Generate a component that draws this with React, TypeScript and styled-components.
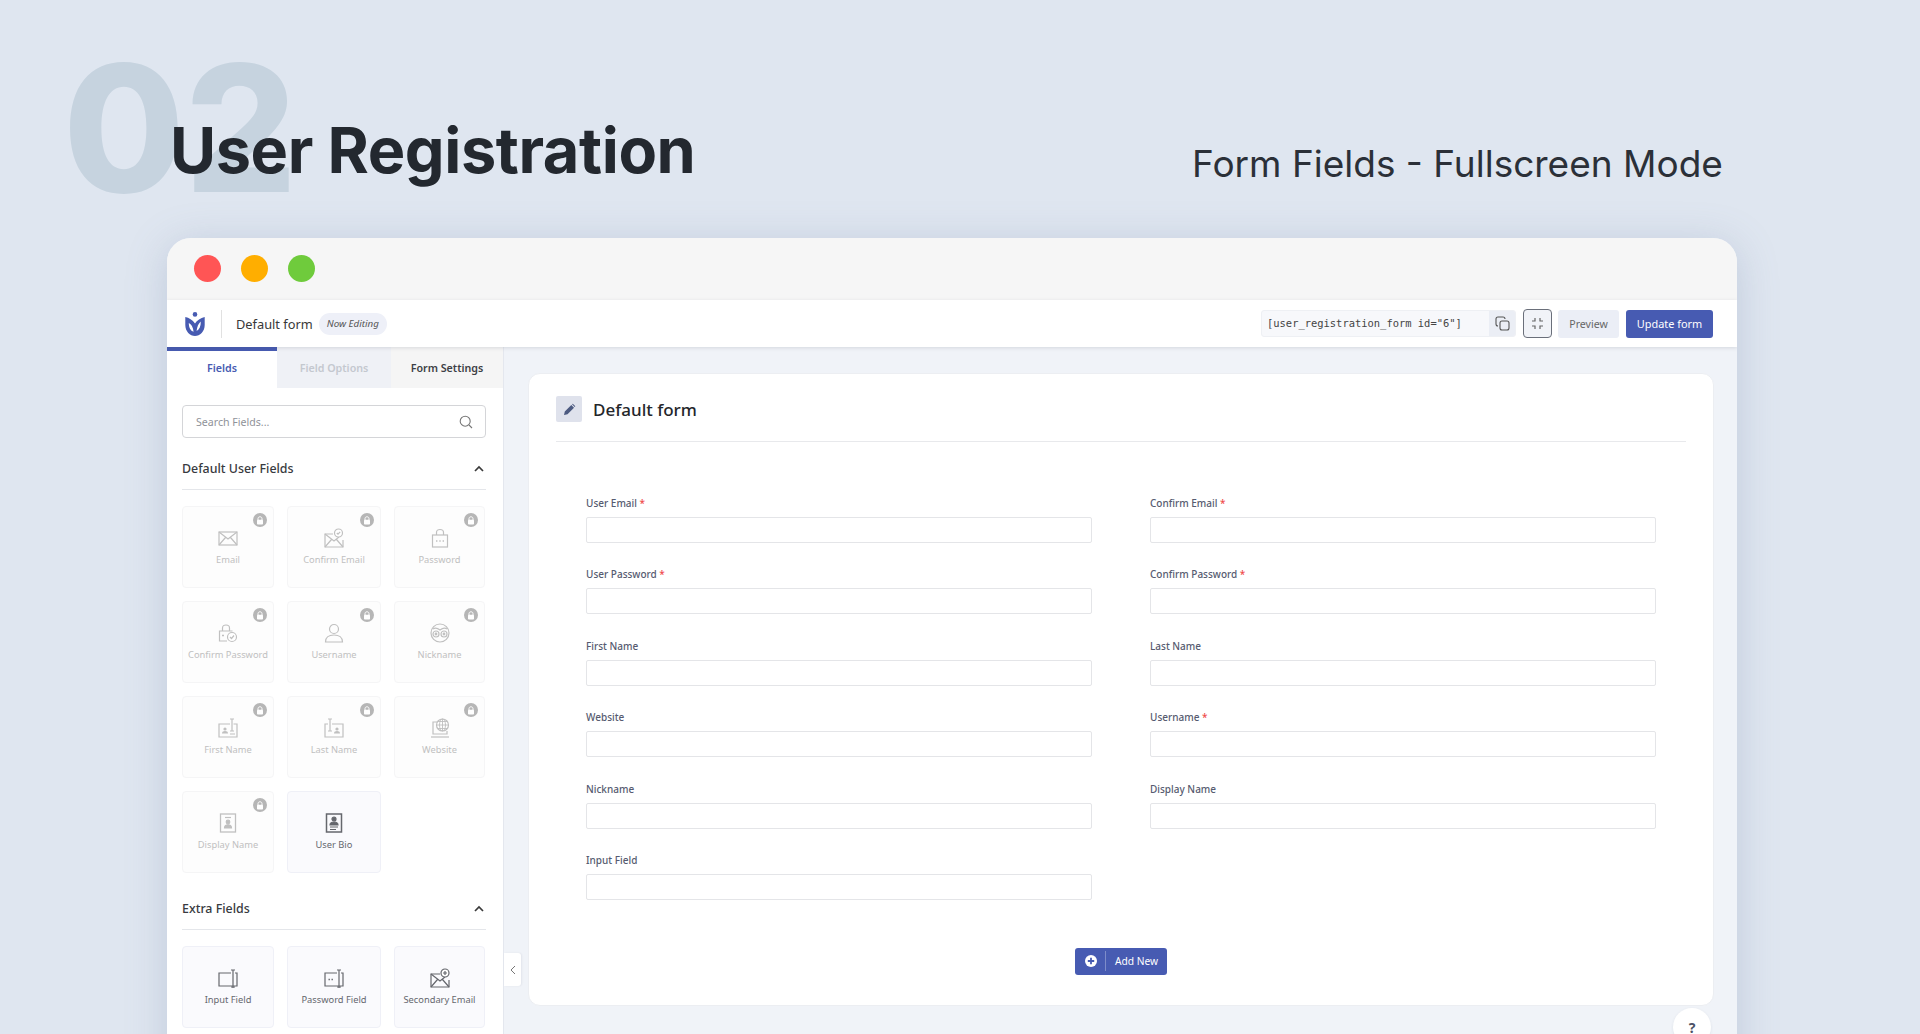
import { ReactNode } from 'react'
import styled, { createGlobalStyle } from 'styled-components'

const GlobalStyle = createGlobalStyle`
  html, body {
    margin: 0;
    height: 1034px;
    overflow: hidden;
    background: #dfe6f0;
    font-family: "Noto Sans", "Open Sans", sans-serif;
  }
  * { box-sizing: border-box; }
`

const BLUE = '#475bb2'

const Page = styled.div`
  width: 1920px;
  height: 1034px;
  overflow: hidden;
  padding: 0 183px 0 167px;
`

const Hero = styled.header`
  position: relative;
  height: 238px;
`

const BigNumber = styled.div`
  position: absolute;
  left: -104px;
  top: 38px;
  font-family: Inter, sans-serif;
  font-size: 176px;
  line-height: 180px;
  font-weight: 800;
  letter-spacing: 0;
  color: #c6d3df;
`

const Title = styled.h1`
  position: absolute;
  left: 3px;
  top: 115px;
  margin: 0;
  font-family: Inter, sans-serif;
  font-size: 63px;
  line-height: 70px;
  font-weight: 700;
  letter-spacing: -0.4px;
  color: #23282f;
`

const Subtitle = styled.div`
  position: absolute;
  left: 1025px;
  top: 140px;
  font-family: Inter, sans-serif;
  font-size: 37px;
  line-height: 48px;
  font-weight: 400;
  white-space: nowrap;
  color: #2b3038;
`

const Window = styled.div`
  position: relative;
  width: 1570px;
  height: 1000px;
  border-radius: 24px 24px 0 0;
  background: #f0f3f8;
  box-shadow: 0 6px 40px rgba(110, 130, 165, 0.28);
  overflow: hidden;
`

const Chrome = styled.div`
  height: 62px;
  display: flex;
  align-items: center;
  gap: 20px;
  padding: 0 0 1px 27px;
  background: #f6f6f6;
`

const Dot = styled.span<{ $color: string }>`
  width: 27px;
  height: 27px;
  border-radius: 50%;
  background: ${(p) => p.$color};
`

const TopBar = styled.div`
  position: relative;
  z-index: 2;
  height: 47px;
  display: flex;
  align-items: center;
  padding: 0 24px 0 18px;
  background: #fff;
  box-shadow: 0 1px 4px rgba(60, 70, 90, 0.16);
`

const LogoWrap = styled.div`
  width: 37px;
  height: 28px;
  display: flex;
  align-items: center;
  border-right: 1px solid #e1e1e1;
`

const FormName = styled.span`
  margin-left: 14px;
  font-size: 12.8px;
  color: #383838;
`

const EditBadge = styled.span`
  margin-left: 6px;
  height: 22px;
  padding: 0 8px;
  display: flex;
  align-items: center;
  border-radius: 11px;
  background: #eef0f8;
  font-size: 9.8px;
  font-style: italic;
  color: #555;
`

const TopActions = styled.div`
  margin-left: auto;
  display: flex;
  align-items: center;
`

const Shortcode = styled.div`
  width: 255px;
  height: 27px;
  display: flex;
  border: 1px solid #eef0f4;
  border-radius: 3px;
  background: #f7f8fb;
  overflow: hidden;
`

const ShortcodeText = styled.span`
  flex: 1;
  padding-left: 5px;
  font-family: "DejaVu Sans Mono", monospace;
  font-size: 10.45px;
  line-height: 25px;
  color: #444;
`

const CopyBox = styled.span`
  width: 26px;
  display: flex;
  align-items: center;
  justify-content: center;
  background: #ebeef5;
`

const CollapseButton = styled.button`
  margin-left: 7px;
  width: 29px;
  height: 29px;
  padding: 0;
  display: flex;
  align-items: center;
  justify-content: center;
  border: 1px solid #6a6f7a;
  border-radius: 4px;
  background: #f1f3f8;
`

const ActionButton = styled.button<{ $primary?: boolean }>`
  height: 28px;
  padding: 0;
  border: 0;
  border-radius: 3px;
  font-family: inherit;
  font-size: ${(p) => (p.$primary ? 10.9 : 10.6)}px;
  margin-left: ${(p) => (p.$primary ? 7 : 6)}px;
  width: ${(p) => (p.$primary ? 87 : 61)}px;
  background: ${(p) => (p.$primary ? BLUE : '#ebeef6')};
  color: ${(p) => (p.$primary ? '#fff' : '#666')};
`

const Workspace = styled.div`
  display: flex;
  height: 891px;
`

const Sidebar = styled.aside`
  position: relative;
  width: 337px;
  flex: none;
  background: #fff;
  border-right: 1px solid #e4e7ee;
`

const Tabs = styled.div`
  display: flex;
  height: 41px;
`

const Tab = styled.div<{ $active?: boolean; $muted?: boolean }>`
  width: ${(p) => (p.$active ? 110 : p.$muted ? 114 : 112)}px;
  display: flex;
  align-items: center;
  justify-content: center;
  padding-bottom: 4px;
  font-size: 10.7px;
  font-weight: 600;
  border-top: 4px solid ${(p) => (p.$active ? BLUE : 'transparent')};
  background: ${(p) => (p.$active ? '#fff' : p.$muted ? '#eff1f6' : '#f5f5f5')};
  color: ${(p) => (p.$active ? BLUE : p.$muted ? '#c4c8cf' : '#3d3f45')};
`

const SidePanel = styled.div`
  padding: 17px 17px 0 15px;
`

const SearchBox = styled.div`
  height: 33px;
  display: flex;
  align-items: center;
  justify-content: space-between;
  padding: 0 12px 0 13px;
  border: 1px solid #d4d5d8;
  border-radius: 4px;
  font-size: 10.6px;
  color: #8f9299;
`

const SectionHead = styled.div<{ $first?: boolean }>`
  margin-top: ${(p) => (p.$first ? 19 : 24)}px;
  height: 33px;
  padding: 3px 2px 0 0;
  display: flex;
  align-items: flex-start;
  justify-content: space-between;
  border-bottom: 1px solid #e4e6ea;
  line-height: 18px;
  font-size: 12.4px;
  font-weight: 500;
  color: #383a40;
`

const SectionChevron = styled.span`
  display: flex;
  height: 18px;
  align-items: center;
`

const FieldGrid = styled.div`
  margin-top: 16px;
  display: grid;
  grid-template-columns: 92px 94px 91px;
  grid-auto-rows: 82px;
  gap: 13px;
`

const FieldCard = styled.div<{ $locked?: boolean }>`
  position: relative;
  display: flex;
  flex-direction: column;
  align-items: center;
  padding-top: 21px;
  border-radius: 4px;
  border: 1px solid ${(p) => (p.$locked ? '#f5f5f6' : '#eff0f7')};
  background: ${(p) => (p.$locked ? '#fdfdfd' : '#fafafd')};
  color: ${(p) => (p.$locked ? '#c0c0c0' : '#65676d')};
  font-size: 9.3px;
  white-space: nowrap;
`

const CardLabel = styled.span`
  margin-top: 4px;
  line-height: 16px;
`

const LockBadge = styled.span`
  position: absolute;
  top: 6px;
  right: 6px;
  width: 14px;
  height: 14px;
  border-radius: 50%;
  display: flex;
  align-items: center;
  justify-content: center;
  background: #b6b6b6;
`

const CollapseTab = styled.div`
  position: absolute;
  top: 606px;
  right: -18px;
  width: 17px;
  height: 33px;
  display: flex;
  align-items: center;
  justify-content: center;
  border-radius: 0 3px 3px 0;
  background: #fff;
  box-shadow: 1px 0 2px rgba(60, 70, 90, 0.08);
`

const Main = styled.main`
  position: relative;
  flex: 1;
  padding: 26px 25px 0 24px;
`

const FormCard = styled.section`
  height: 633px;
  padding: 22px 27px 0;
  border: 1px solid #eceef2;
  border-radius: 12px;
  background: #fff;
`

const FormHeader = styled.div`
  height: 46px;
  display: flex;
  align-items: flex-start;
  gap: 11px;
  border-bottom: 1px solid #e8e9ec;
`

const PencilBox = styled.span`
  width: 26px;
  height: 26px;
  display: flex;
  align-items: center;
  justify-content: center;
  border-radius: 2px;
  background: #dfe2ec;
`

const FormTitle = styled.h2`
  margin: 0;
  font-size: 17px;
  line-height: 28px;
  font-weight: 500;
  color: #24262b;
`

const FormBody = styled.div`
  padding: 53px 30px 0;
  display: grid;
  grid-template-columns: 506px 506px;
  column-gap: 58px;
  row-gap: 23.4px;
`

const Field = styled.div`
  display: flex;
  flex-direction: column;
`

const FieldLabel = styled.label`
  height: 16px;
  margin-bottom: 6px;
  font-size: 10px;
  line-height: 16px;
  font-weight: 500;
  color: #565b70;
`

const Required = styled.span`
  color: #ef4b4b;
`

const TextInput = styled.input`
  height: 26px;
  border: 1px solid #e4e5e8;
  border-radius: 2px;
  background: #fff;
`

const AddRow = styled.div`
  margin-top: 48px;
  display: flex;
  justify-content: center;
`

const AddButton = styled.button`
  width: 92px;
  height: 27px;
  padding: 0 0 0 10px;
  display: flex;
  align-items: center;
  border: 0;
  border-radius: 3px;
  background: ${BLUE};
  color: #fff;
  font-family: inherit;
  font-size: 10.2px;
`

const AddLabel = styled.span`
  margin-left: 8px;
  padding-left: 9px;
  line-height: 20px;
  border-left: 1px solid rgba(255, 255, 255, 0.3);
`

const HelpButton = styled.div`
  position: absolute;
  top: 661px;
  right: 28px;
  width: 38px;
  height: 38px;
  display: flex;
  align-items: center;
  justify-content: center;
  border-radius: 50%;
  background: #fff;
  box-shadow: 0 1px 3px rgba(60, 70, 90, 0.1);
  font-size: 14px;
  font-weight: 700;
  color: #4c5266;
`

const Logo = () => (
  <svg width="20" height="24" viewBox="0 0 20 24">
    <circle cx="10" cy="2.4" r="2.3" fill={BLUE} />
    <path
      d="M.3 5C4 5.500 7.500 8 10 11.500 12 8.500 15.500 6 19.700 5V13C19.700 19.500 15 24 10 24S.3 19.500.3 13Z"
      fill={BLUE}
    />
    <path d="M3.800 11C6.300 12.300 8 15 8.600 19.800 5.500 18.800 3.800 15.500 3.800 11Z" fill="#fff" />
    <path d="M15.800 9.500C13.500 11.500 12 14.500 11.600 19 14.500 17.500 15.800 14 15.800 9.500Z" fill="#fff" />
  </svg>
)

const Glyph = ({ children, size = 20 }: { children: ReactNode; size?: number }) => (
  <svg width={size} height={size} viewBox="0 0 20 20" fill="none" stroke="currentColor" strokeWidth="1.200">
    {children}
  </svg>
)

const envelope = (
  <>
    <rect x="1" y="4" width="18" height="13" />
    <path d="M1 4l9 7 9-7M1 17l6.500-7.500M19 17l-6.500-7.500" />
  </>
)

const person = (
  <>
    <circle cx="7" cy="11" r="1.600" fill="currentColor" stroke="none" />
    <path d="M4 15.500c0-1.600 1.300-2.400 3-2.400s3 .8 3 2.400Z" fill="currentColor" stroke="none" />
  </>
)

const icons: Record<string, ReactNode> = {
  Email: envelope,
  'Confirm Email': (
    <>
      <path d="M9 6H1v13h18v-7" />
      <path d="M1 6l9 7 5-4M1 19l6.500-7.500M19 19l-6.500-7.500" />
      <circle cx="14.500" cy="5" r="4" fill="#fff" />
      <path d="M12.800 5l1.200 1.200 2.200-2.400" />
    </>
  ),
  Password: (
    <>
      <rect x="2.500" y="7" width="15" height="12" />
      <path d="M6.500 7V4.500C6.500 2.600 8 1.500 10 1.500s3.500 1.100 3.500 3V7" />
      <path d="M6 13h1.400M9.300 13h1.400M12.600 13H14" strokeWidth="1.500" />
    </>
  ),
  'Confirm Password': (
    <>
      <path d="M9 18H1.500V8h13" />
      <path d="M4.500 8V5C4.500 3 6 2 8 2s3.500 1 3.500 3v3" />
      <path d="M4 12.500h2" strokeWidth="1.500" />
      <circle cx="14" cy="14" r="4.500" fill="#fff" />
      <path d="M12 14l1.500 1.500 2.500-3" />
    </>
  ),
  Username: (
    <>
      <circle cx="10" cy="6" r="4.500" />
      <path d="M1.500 19c0-4.500 3.500-7 8.500-7s8.500 2.500 8.500 7Z" />
    </>
  ),
  Nickname: (
    <>
      <circle cx="10" cy="10" r="9" />
      <circle cx="6" cy="11" r="3" />
      <circle cx="14" cy="11" r="3" />
      <circle cx="6" cy="11" r=".8" fill="currentColor" />
      <circle cx="14" cy="11" r=".8" fill="currentColor" />
      <path d="M3 6c2-1.500 4.500-1 7 1 2.500-2 5-2.500 7-1" />
    </>
  ),
  'First Name': (
    <>
      <path d="M12 6H1v13h18V6h-3.500" />
      {person}
      <path d="M14 1v12M12 1h4M12 13h4M12 16h5" />
    </>
  ),
  'Last Name': (
    <>
      <path d="M4 6H1v13h18V6H8" />
      <g transform="translate(6 0)">{person}</g>
      <path d="M6 1v12M4 1h4M4 13h4" />
    </>
  ),
  Website: (
    <>
      <path d="M7 4H3v12h14v-3" />
      <path d="M1 19h18" />
      <circle cx="12.500" cy="7" r="6" fill="#fff" />
      <path d="M6.500 7h12M12.500 1v12M8 3.500h9M8 10.500h9" strokeWidth=".9" />
      <ellipse cx="12.500" cy="7" rx="3" ry="6" strokeWidth=".9" />
    </>
  ),
  'Display Name': (
    <>
      <rect x="2.500" y="1" width="15" height="18" strokeWidth="1.300" />
      <path d="M7 4.500h6" />
      <circle cx="10" cy="9" r="1.800" fill="currentColor" />
      <path d="M6.500 15c0-2 1.500-3.200 3.500-3.200s3.500 1.200 3.500 3.200Z" fill="currentColor" />
    </>
  ),
  'User Bio': (
    <>
      <rect x="2.500" y="1" width="15" height="18" strokeWidth="1.500" />
      <circle cx="10" cy="6" r="2" fill="currentColor" />
      <path d="M6 12c0-2 2-3 4-3s4 1 4 3ZM6 14h8M6 16.500h6" fill="currentColor" />
    </>
  ),
  'Input Field': (
    <>
      <path d="M13 5H1v13h18V5h-2" />
      <path d="M15 2v18M13 2h4M13 19h4" />
    </>
  ),
  'Password Field': (
    <>
      <path d="M13 5H1v13h18V5h-2" />
      <path d="M15 2v18M13 2h4M13 19h4" />
      <path d="M4.500 11.500h1.400M7.500 11.500h1.400" strokeWidth="1.600" />
    </>
  ),
  'Secondary Email': (
    <>
      <path d="M10 6H1v13h18v-7" />
      <path d="M1 6l9 7 5-4M1 19l6.500-7.500M19 19l-6.500-7.500" />
      <circle cx="15" cy="5" r="4" fill="#fff" />
      <path d="M13 5h4M15 3v4" />
    </>
  ),
}

const LockIcon = () => (
  <svg width="8" height="9" viewBox="0 0 8 9">
    <path d="M2 4V2.600C2 1.400 2.900.8 4 .8s2 .6 2 1.800V4" fill="none" stroke="#fff" />
    <rect x="1" y="3.800" width="6" height="4.700" rx=".8" fill="#fff" />
  </svg>
)

const Chevron = () => (
  <SectionChevron>
    <svg width="10" height="8" viewBox="0 0 10 8" fill="none" stroke="#3a3a3a" strokeWidth="1.700">
      <path d="M1 6l4-4 4 4" />
    </svg>
  </SectionChevron>
)

const FieldTile = ({ name, locked }: { name: string; locked?: boolean }) => (
  <FieldCard $locked={locked}>
    {locked && (
      <LockBadge>
        <LockIcon />
      </LockBadge>
    )}
    <Glyph>{icons[name]}</Glyph>
    <CardLabel>{name}</CardLabel>
  </FieldCard>
)

const defaultFields = [
  'Email',
  'Confirm Email',
  'Password',
  'Confirm Password',
  'Username',
  'Nickname',
  'First Name',
  'Last Name',
  'Website',
  'Display Name',
]

const extraFields = ['Input Field', 'Password Field', 'Secondary Email']

const formFields = [
  { label: 'User Email', required: true },
  { label: 'Confirm Email', required: true },
  { label: 'User Password', required: true },
  { label: 'Confirm Password', required: true },
  { label: 'First Name' },
  { label: 'Last Name' },
  { label: 'Website' },
  { label: 'Username', required: true },
  { label: 'Nickname' },
  { label: 'Display Name' },
  { label: 'Input Field' },
]

const App = () => (
  <Page>
    <GlobalStyle />
    <Hero>
      <BigNumber>02</BigNumber>
      <Title>User Registration</Title>
      <Subtitle>Form Fields - Fullscreen Mode</Subtitle>
    </Hero>
    <Window>
      <Chrome>
        <Dot $color="#ff5555" />
        <Dot $color="#ffae00" />
        <Dot $color="#6fcb3c" />
      </Chrome>
      <TopBar>
        <LogoWrap>
          <Logo />
        </LogoWrap>
        <FormName>Default form</FormName>
        <EditBadge>Now Editing</EditBadge>
        <TopActions>
          <Shortcode>
            <ShortcodeText>[user_registration_form id="6"]</ShortcodeText>
            <CopyBox>
              <svg width="15" height="15" viewBox="0 0 15 15" fill="none" stroke="#555" strokeWidth="1.100">
                <rect x="5" y="5" width="9" height="9" rx="2" />
                <path d="M3 10c-1.200 0-2-.8-2-2V3c0-1.200.8-2 2-2h5c1.200 0 2 .8 2 2" />
              </svg>
            </CopyBox>
          </Shortcode>
          <CollapseButton aria-label="Exit fullscreen">
            <svg width="13" height="13" viewBox="0 0 13 13" fill="none" stroke="#666" strokeWidth="1.200">
              <path d="M1 4h3V1M12 4H9V1M1 9h3v3M12 9H9v3" />
            </svg>
          </CollapseButton>
          <ActionButton>Preview</ActionButton>
          <ActionButton $primary>Update form</ActionButton>
        </TopActions>
      </TopBar>
      <Workspace>
        <Sidebar>
          <Tabs>
            <Tab $active>Fields</Tab>
            <Tab $muted>Field Options</Tab>
            <Tab>Form Settings</Tab>
          </Tabs>
          <SidePanel>
            <SearchBox>
              Search Fields...
              <svg width="14" height="14" viewBox="0 0 14 14" fill="none" stroke="#777" strokeWidth="1.100">
                <circle cx="6.200" cy="6.200" r="5" />
                <path d="M10 10l3 3" />
              </svg>
            </SearchBox>
            <SectionHead $first>
              Default User Fields
              <Chevron />
            </SectionHead>
            <FieldGrid>
              {defaultFields.map((name) => (
                <FieldTile key={name} name={name} locked />
              ))}
              <FieldTile name="User Bio" />
            </FieldGrid>
            <SectionHead>
              Extra Fields
              <Chevron />
            </SectionHead>
            <FieldGrid>
              {extraFields.map((name) => (
                <FieldTile key={name} name={name} />
              ))}
            </FieldGrid>
          </SidePanel>
          <CollapseTab>
            <svg width="6" height="10" viewBox="0 0 6 10" fill="none" stroke="#777">
              <path d="M5 1L1 5l4 4" />
            </svg>
          </CollapseTab>
        </Sidebar>
        <Main>
          <FormCard>
            <FormHeader>
              <PencilBox>
                <svg width="13" height="13" viewBox="0 0 13 13" fill="#4c5a80">
                  <path d="M1 12l.8-3.500L8.300 2l2.700 2.700-6.500 6.500ZM9 1.300l.8-.6 2.500 2.500-.6.800Z" />
                </svg>
              </PencilBox>
              <FormTitle>Default form</FormTitle>
            </FormHeader>
            <FormBody>
              {formFields.map((field) => (
                <Field key={field.label}>
                  <FieldLabel>
                    {field.label}
                    {field.required && <Required> *</Required>}
                  </FieldLabel>
                  <TextInput />
                </Field>
              ))}
            </FormBody>
            <AddRow>
              <AddButton>
                <svg width="12" height="12" viewBox="0 0 12 12">
                  <circle cx="6" cy="6" r="6" fill="#fff" />
                  <path d="M6 2.800v6.400M2.800 6h6.400" stroke={BLUE} strokeWidth="1.800" />
                </svg>
                <AddLabel>Add New</AddLabel>
              </AddButton>
            </AddRow>
          </FormCard>
          <HelpButton>?</HelpButton>
        </Main>
      </Workspace>
    </Window>
  </Page>
)

export default App
